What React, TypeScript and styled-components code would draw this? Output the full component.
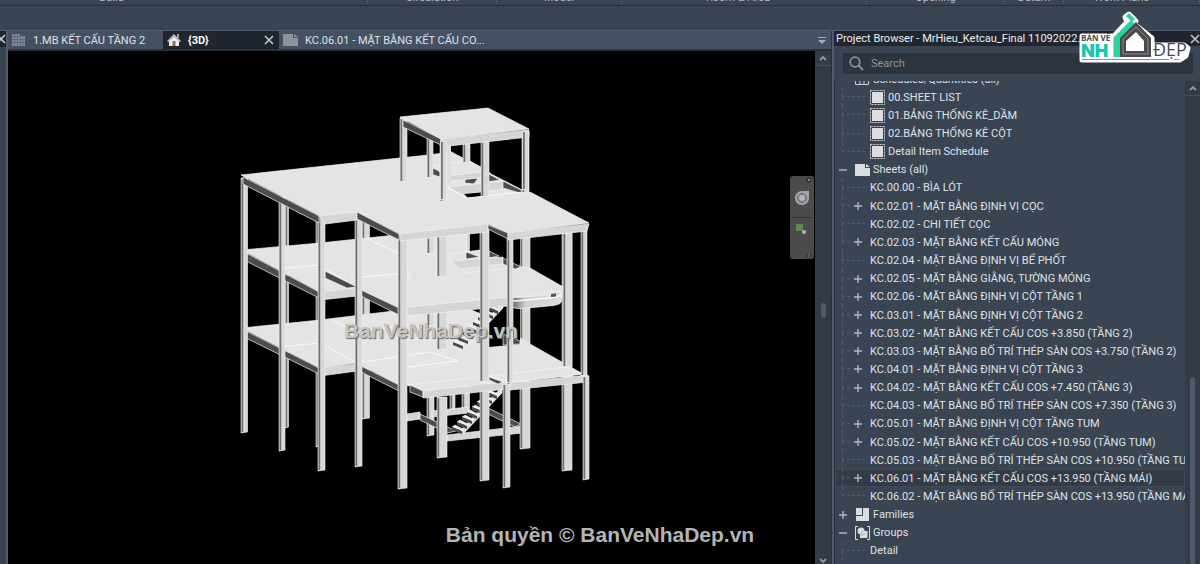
import React from "react";
import styled, { createGlobalStyle, css } from "styled-components";

const color = {
  frame: "#3b4452",
  frameDark: "#2a303b",
  edge: "#515b6b",
  tabs: "#465063",
  title: "#20262f",
  rail: "#343b47",
  thumb: "#4e596a",
  field: "#2d343f",
  selected: "#343b47",
  text: "#dfe2e6",
  muted: "#8d939d",
  guide: "#525b69",
};

const GlobalStyle = createGlobalStyle`
  * { box-sizing: border-box; }
  body {
    margin: 0;
    background: ${color.frame};
    color: ${color.text};
    font: 11px/18px Roboto, "Noto Sans", sans-serif;
  }
  button, input { font: inherit; color: inherit; border: 0; margin: 0; padding: 0; background: none; }
  ul { list-style: none; margin: 0; padding: 0; }
  svg { display: block; }
`;

const Shell = styled.div`
  position: relative;
  display: flex;
  flex-direction: column;
  height: 100vh;
  overflow: hidden;
`;

/* ---------- Ribbon ---------- */

const Ribbon = styled.header`
  display: grid;
  grid-template-columns: 368fr 129fr 125fr 245fr 138fr 59fr 136fr;
  grid-template-rows: 5px;
  align-items: end;
  height: 6px;
  overflow: hidden;
  border-bottom: 1px solid ${color.frameDark};
`;

const RibbonPanel = styled.div<{ $trail?: number }>`
  padding-right: ${(p) => p.$trail ?? 0}px;
  border-right: 1px solid #4a5362;
  text-align: center;
  line-height: 14px;
  color: #b9bec6;
  white-space: nowrap;
`;

const OptionsBar = styled.div`
  flex: none;
  height: 25px;
  border-bottom: 1px solid ${color.edge};
`;

const Workspace = styled.div`
  flex: 1;
  min-height: 0;
  display: flex;
`;

/* ---------- Left dock ---------- */

const Dock = styled.aside`
  width: 8px;
  flex: none;
  overflow: hidden;
  background: ${color.frame};
  border-right: 2px solid ${color.edge};
`;

const DockTitle = styled.div`
  display: flex;
  justify-content: flex-end;
  align-items: center;
  height: 16px;
  background: ${color.title};
`;

/* ---------- Documents ---------- */

const Documents = styled.main`
  flex: 1;
  min-width: 0;
  display: flex;
  flex-direction: column;
  border-right: 1px solid ${color.frameDark};
`;

const TabBar = styled.div`
  display: flex;
  align-items: stretch;
  height: 20px;
  background: ${color.tabs};
  border-bottom: 2px solid ${color.frameDark};
`;

const Tab = styled.div<{ $active?: boolean; $wide?: boolean }>`
  display: flex;
  align-items: center;
  width: ${(p) => (p.$wide ? 216 : p.$active ? 116 : 155)}px;
  padding: 0 5px 0 4px;
  background: ${(p) => (p.$active ? color.title : "transparent")};
  font-weight: ${(p) => (p.$active ? 700 : 400)};
  color: ${(p) => (p.$active ? "#fff" : color.text)};
`;

const TabButton = styled.button`
  flex: 1;
  display: flex;
  align-items: center;
  gap: 7px;
  line-height: 18px;
  white-space: nowrap;
  text-align: left;
  span { padding-top: 1px; }
`;

const IconButton = styled.button`
  display: grid;
  place-items: center;
  flex: none;
  width: 10px;
  height: 16px;
`;

const TabMenu = styled(IconButton)`
  margin: 1px 4px 0 auto;
`;

const ViewRow = styled.div`
  flex: 1;
  min-height: 0;
  display: flex;
`;

const Viewport = styled.section`
  position: relative;
  flex: 1;
  min-width: 0;
  background: #000;
`;

const Model = styled.svg`
  width: 100%;
  height: 100%;
`;

const NavigationBar = styled.div`
  position: absolute;
  top: 125px;
  right: 1px;
  width: 24px;
  height: 83px;
  border-radius: 3px;
  background: #4b4b4b;
`;

const Rail = styled.div<{ $width: number }>`
  display: flex;
  flex-direction: column;
  align-items: center;
  flex: none;
  width: ${(p) => p.$width}px;
  background: ${color.rail};
`;

const RailButton = styled.button`
  display: grid;
  place-items: center;
  width: 100%;
  height: 15px;
  border-bottom: 1px solid #454f5e;
`;

const RailSpace = styled.div<{ $grow: number }>`
  flex: ${(p) => p.$grow} 1 0;
`;

const Thumb = styled.div<{ $grow?: number }>`
  width: 5px;
  border-radius: 3px;
  background: ${color.thumb};
  ${(p) => (p.$grow ? css`flex: ${p.$grow} 1 0;` : css`height: 15px;`)}
`;

/* ---------- Project browser ---------- */

const Browser = styled.aside`
  display: flex;
  flex-direction: column;
  flex: none;
  width: 368px;
  border-left: 2px solid ${color.edge};
`;

const BrowserTitle = styled.div`
  display: flex;
  align-items: center;
  justify-content: space-between;
  flex: none;
  height: 15px;
  padding: 0 0 0 2px;
  background: ${color.title};
  color: #eceef0;
  line-height: 15px;
  white-space: nowrap;
`;

const SearchField = styled.label`
  display: flex;
  align-items: center;
  gap: 7px;
  flex: none;
  height: 21px;
  margin: 7px 7px 7px 9px;
  padding: 0 6px;
  background: ${color.field};
  input {
    flex: 1;
    min-width: 0;
    outline: none;
  }
  input::placeholder { color: ${color.muted}; opacity: 1; }
`;

const BrowserBody = styled.div`
  flex: 1;
  min-height: 0;
  display: flex;
`;

const TreeClip = styled.div`
  flex: 1;
  min-width: 0;
  display: flex;
  overflow: hidden;
  border-left: 1px solid ${color.frameDark};
`;

const Tree = styled.ul`
  flex: 1;
  min-width: 0;
  display: grid;
  grid-auto-rows: minmax(18px, 1fr);
  margin-top: -11px;
  padding-bottom: 4px;
`;

const TreeRow = styled.li<{ $selected?: boolean }>`
  display: flex;
  align-items: center;
  overflow: hidden;
  white-space: nowrap;
  background: ${(p) => (p.$selected ? color.selected : "transparent")};
  outline: ${(p) => (p.$selected ? "1px solid #414a59" : "none")};
  outline-offset: -1px;
`;

const Branch = styled.span<{ $last?: boolean; $short?: boolean }>`
  align-self: stretch;
  display: grid;
  grid-template-rows: 1fr 1fr;
  flex: none;
  width: ${(p) => (p.$short ? 8 : 23)}px;
  margin-left: 7px;
  &::before {
    content: "";
    border-left: 1px dashed ${color.guide};
    border-bottom: 1px dashed ${color.guide};
  }
  &::after {
    content: "";
    border-left: ${(p) => (p.$last ? "0" : `1px dashed ${color.guide}`)};
  }
`;

const Toggle = styled.button`
  display: grid;
  place-items: center;
  flex: none;
  width: 9px;
  height: 9px;
  margin-left: 3px;
  margin-right: 8px;
`;

const RowIcon = styled.span`
  flex: none;
  width: 15px;
  margin-right: 3px;
`;

const RowGap = styled.span`
  flex: none;
  width: 5px;
`;

const RowLabel = styled.span`
  padding-top: 1px;
`;

/* ---------- Overlays ---------- */

const Brand = styled.svg`
  position: absolute;
  top: 8px;
  right: 6px;
  width: 118px;
  height: 58px;
`;

const Copyright = styled.p`
  position: absolute;
  left: 0;
  right: 0;
  bottom: 17px;
  margin: 0;
  text-align: center;
  font: 700 21px/24px "Liberation Sans", Arial, sans-serif;
  color: #b4b4b4;
  pointer-events: none;
`;

/* ---------- Icons ---------- */

const Cross = ({ tone = "#c3c7cd" }: { tone?: string }) => (
  <svg width="10" height="10" viewBox="0 0 10 10" stroke={tone} strokeWidth="1.6">
    <path d="M1 1l8 8M9 1l-8 8" />
  </svg>
);

const ChevronUp = ({ down }: { down?: boolean }) => (
  <svg width="8" height="6" viewBox="0 0 8 6" fill="none" stroke="#8f98a5" strokeWidth="1.8">
    <path d={down ? "M1 1l3 3 3-3" : "M1 5l3-3 3 3"} />
  </svg>
);

const PlusMinus = ({ open }: { open?: boolean }) => (
  <svg width="8" height="8" viewBox="0 0 8 8" stroke="#b3b8c0" strokeWidth="1.4">
    <path d={open ? "M0 4h8" : "M0 4h8M4 0v8"} />
  </svg>
);

const PlanIcon = () => (
  <svg width="14" height="14" viewBox="0 0 14 14">
    <path d="M0 1h8v2h5v10H0z" fill="#858c98" />
    <path d="M0 3.500h8M0 6.500h13M0 9.500h13M2.500 1v12M5.500 1v12M8.500 3v10M11 3v10" stroke="#5c6575" strokeWidth="0.8" />
  </svg>
);

const HomeIcon = () => (
  <svg width="14" height="14" viewBox="0 0 14 14">
    <path d="M10 1h2v4h-2z" fill="#9aa0a8" />
    <path d="M2 7l5-5 5 5v6H2z" fill="#f0ede3" />
    <path d="M0 8l7-7 7 7-1.500 1L7 4 1.500 9z" fill="#b5b9bf" />
    <path d="M5.500 8h3v5h-3z" fill="#8d7440" />
  </svg>
);

const SheetIcon = ({ tone }: { tone: string }) => (
  <svg width="15" height="12" viewBox="0 0 15 12">
    <path d="M0 0h10v4h5v8H0z" fill={tone} />
    <path d="M11 0l4 3h-4z" fill={tone} />
  </svg>
);

const ScheduleIcon = () => (
  <svg width="15" height="15" viewBox="0 0 15 15">
    <rect x="0.500" y="0.500" width="14" height="14" fill="none" stroke="#c9ccd0" strokeDasharray="2 1" />
    <rect x="2" y="2" width="11" height="11" fill="#dedede" />
  </svg>
);

const TableIcon = () => (
  <svg width="14" height="12" viewBox="0 0 14 12" fill="none" stroke="#c9ccd0">
    <path d="M.5.5h13v11H.5zM.5 4.500h13M5 4.500v7M9 4.500v7" />
  </svg>
);

const FamilyIcon = () => (
  <svg width="14" height="14" viewBox="0 0 14 14" fill="#dcdddf">
    <path d="M1 0h6v7H1zM8 0h6v13H1V8h7z" />
  </svg>
);

const GroupIcon = () => (
  <svg width="15" height="14" viewBox="0 0 15 14">
    <path d="M3 .5H.5v13H3M12 .5h2.500v13H12" fill="none" stroke="#dcdddf" />
    <circle cx="6" cy="5" r="3.500" fill="#dcdddf" />
    <path d="M7 5h5.500v7H5V9z" fill="#dcdddf" />
    <path d="M9 4.500L5.500 8 8 9.500l1.500-2" fill="none" stroke="#aeb3ba" />
  </svg>
);

const SearchIcon = () => (
  <svg width="15" height="15" viewBox="0 0 15 15" fill="none" stroke="#8d939d" strokeWidth="1.800">
    <circle cx="6" cy="6" r="4.800" />
    <path d="M9.500 9.500l4.500 4.500" />
  </svg>
);

/* ---------- Structural model ---------- */

type Face = "top" | "front" | "side" | "hole" | "line";
const faceFill: Record<Face, string> = {
  top: "#e4e4e4",
  front: "#d5d5d5",
  side: "#4c4c4c",
  hole: "#000",
  line: "none",
};

const Faces = ({ items }: { items: [Face, string][] }) => (
  <>
    {items.map(([face, points], i) =>
      face === "line" ? (
        <polyline key={i} points={points} fill="none" stroke="#f8f8f8" strokeWidth="1" />
      ) : (
        <polygon
          key={i}
          points={points}
          fill={faceFill[face]}
          stroke={face === "hole" ? "none" : "#f4f4f4"}
          strokeWidth="0.700"
        />
      )
    )}
  </>
);

const Columns = ({ items }: { items: [number, number, number, number][] }) => (
  <>
    {items.map(([x, w, y1, y2], i) => (
      <g key={i}>
        <path d={`M${x} ${y1}h${w}V${y2 - 1}l${-w} 1z`} fill="#d8d8d8" stroke="#f2f2f2" strokeWidth="0.600" />
        <path d={`M${x + 0.5} ${y1 + 1}h1.700V${y2 - 1}h-1.700z`} fill="#6e6e6e" />
      </g>
    ))}
  </>
);

const Stair = ({ x, y, dy }: { x: number; y: number; dy: number }) => (
  <g>
    <path
      d={`M${x + 12} ${y + 6}L${x + 50} ${y + 6 - dy * 8}V${y - dy * 8}L${x + 8} ${y + 4}z`}
      fill="#dedede"
      stroke="#fff"
      strokeWidth="0.700"
    />
    {Array.from({ length: 8 }, (_, i) => (
      <g key={i}>
        <path d={`M${x + i * 5} ${y - i * dy}l11 4v-2l-8-4z`} fill="#eee" stroke="#fff" strokeWidth="0.500" />
        <path d={`M${x + i * 5} ${y - i * dy}l10 4v3l-10-4z`} fill="#4a4a4a" />
      </g>
    ))}
  </g>
);

const Building = () => (
  <Model viewBox="8 51 807 513" preserveAspectRatio="xMidYMin meet" role="img" aria-label="3D view">
    <defs>
      <linearGradient id="curve" x1="0" x2="1">
        <stop offset="0" stopColor="#555" />
        <stop offset="0.300" stopColor="#d0d0d0" />
        <stop offset="1" stopColor="#dedede" />
      </linearGradient>
    </defs>

    {/* foundation level */}
    <Columns
      items={[
        [285, 3.5, 200, 428],
        [316, 3, 220, 447],
        [362, 7.5, 215, 419],
        [427, 7, 230, 436],
        [462, 7.5, 230, 413],
        [450, 5, 380, 412],
      ]}
    />
    <Faces
      items={[
        ["front", "432,411 468,407 468,413 432,417"],
        ["front", "407,414 420,412 420,419 407,421"],
        ["side", "420,414 456,431 447,433 420,420"],
        ["side", "488,408 521,424 515,427 488,414"],
        ["front", "447,435 522,426 522,433 447,441"],
      ]}
    />
    <Columns items={[[520, 10, 232, 449]]} />
    <Stair x={452} y={427} dy={5} />
    <Columns items={[[562, 10, 230, 471]]} />

    {/* first floor */}
    <Faces
      items={[
        ["top", "242,328 320,320 402,310 468,305 530,344 583,374 508,383 408,385 399,385 357,363 320,368"],
        ["line", "280,347 320,343 357,363 430,352 458,361 407,367"],
        ["line", "332,320 357,332 410,324"],
        ["side", "242,329 319,368 319,374 242,336"],
        ["front", "320,368 357,364 357,371 320,376"],
        ["side", "357,364 399,385 399,391 357,370"],
        ["top", "407,385 490,376 503,382 423,391"],
        ["side", "410,385 423,391 423,397 410,392"],
        ["front", "423,391 507,382 507,389 423,398"],
        ["top", "490,376 566,367 583,374 512,382"],
        ["side", "489,377 503,382 498,384 489,380"],
        ["front", "510,383 588,375 588,382 510,390"],
        ["hole", "470,309 482,314 482,340 496,338 496,305 470,305"],
        ["hole", "489,308 520,305 520,344 489,347"],
        ["side", "503,334 520,341 520,344 503,345"],
      ]}
    />
    <Columns items={[[437, 10, 300, 350], [427, 7, 300, 326], [437, 10, 397, 458]]} />
    <Stair x={453} y={342} dy={5} />

    {/* second floor */}
    <Faces
      items={[
        ["top", "242,250 320,243 405,234 466,230 467,258 530,268 565,288 565,292 512,298 407,307 399,309 357,288 320,292"],
        ["line", "279,269 318,265 357,287"],
        ["line", "350,278 407,273"],
        ["line", "366,238 402,255 410,280"],
        ["side", "325,271 357,287 347,288 325,278"],
        ["side", "242,251 319,292 319,298 242,259"],
        ["front", "320,292 357,288 357,296 320,300"],
        ["side", "357,288 399,308 399,315 357,294"],
        ["front", "407,307 508,297 508,306 407,316"],
        ["hole", "470,237 482,241 482,250 470,245"],
        ["hole", "489,238 520,236 520,264 489,250"],
        ["top", "450,254 480,250 518,267 467,273 450,262"],
        ["side", "466,252 480,257 466,259"],
        ["side", "489,251 499,256 489,258"],
        ["front", "451,261 503,257 503,264 460,269"],
        ["side", "503,258 521,267 515,269 503,264"],
        ["front", "508,298 565,291 565,297 508,304"],
      ]}
    />
    <path
      d="M510 298L552 294.500V291.500H558Q562 292 561.500 296V301Q561 304.500 553 305.500L522 308.500Q512 309 510 305z"
      fill="url(#curve)"
      stroke="#f4f4f4"
      strokeWidth="0.800"
    />
    <path d="M510 300q4 1.500 12 .5l31-3q7-1 8-4" fill="none" stroke="#fafafa" strokeWidth="1.500" />
    <path d="M551 294l5-.5v3l-5 .5z" fill="#555" />

    {/* front columns */}
    <Columns
      items={[
        [437, 10, 232, 277],
        [427, 7, 232, 254],
        [241, 6.5, 178, 433],
        [279, 6, 197, 451],
        [318, 7, 216, 471],
        [355, 7, 212, 467],
        [398, 9, 234, 489],
        [480, 9, 228, 382],
        [480, 9, 391, 481],
        [507, 6, 234, 383],
        [503, 7, 384, 488],
        [563, 9, 230, 367],
        [581, 6, 226, 376],
        [583, 6, 376, 480],
      ]}
    />

    {/* main roof */}
    <Faces
      items={[
        ["top", "241,175 428,155 452,152 470,161 490,172 523,190 530,192 589,223 508,233 488,224 400,234 357,212 320,216"],
        ["hole", "452,152 466,159 482,159 482,169 523,190 530,192 530,187 490,160"],
        ["side", "428,166 440,171 440,177 428,173"],
        ["top", "431,166 465,161 490,173 448,177"],
        ["side", "465,179 478,178 474,184 465,183"],
        ["side", "487,173 500,180 487,182"],
        ["front", "448,176 486,171 486,177 450,181"],
        ["front", "448,187 503,181 503,189 462,195"],
        ["side", "503,181 523,191 520,193 503,188"],
        ["hole", "464,194 486,192 486,196 468,198"],
        ["line", "448,188 467,198 523,192"],
        ["side", "243,177 319,216 319,223 243,184"],
        ["front", "320,216 357,212 357,220 325,224"],
        ["side", "357,212 399,234 399,240 357,219"],
        ["front", "400,234 488,224 488,232 400,241"],
        ["side", "488,225 508,233 508,239 488,229"],
        ["front", "508,233 589,224 587,231 508,240"],
      ]}
    />

    {/* stair tower */}
    <Columns
      items={[
        [427, 6, 136, 178],
        [463, 7, 140, 163],
        [481, 8, 140, 197],
        [400, 7, 118, 182],
        [522, 7, 132, 193],
        [440, 6.5, 139, 202],
      ]}
    />
    <path d="M447 144h4v39h-4z" fill="#dedede" />
    <Faces
      items={[
        ["side", "403,120 441,139 441,145 403,127"],
        ["front", "441,139 529,130 529,137 449,146 441,146"],
        ["top", "400,117 488,108 529,129 441,139"],
      ]}
    />
    <Columns items={[[440.5, 6, 141, 200], [522.5, 6, 131, 190]]} />

    <g fontFamily="Liberation Sans, Arial, sans-serif" fontSize="21" fontWeight="700">
      <text x="344" y="338" fill="#c4c4c4" style={{ textShadow: "1px 1px 1px #666" }}>
        BanVeNhaDep.vn
      </text>
    </g>
  </Model>
);

const Logo = () => (
  <Brand viewBox="1076 8 118 58" role="img" aria-label="Bản vẽ nhà đẹp">
    <g fill="#fff" stroke="#fff" strokeWidth="5" strokeLinejoin="round">
      <path d="M1082 36h30v24h-30zM1113 58V37l14-15-2-5 4-3 7 7-3 2 19 15v20zM1154 45h30l4 3-2 8-6 4h-98v-3h72z" />
    </g>
    <text x="1081" y="41" fontFamily="Open Sans, sans-serif" fontSize="8" fontWeight="700" fill="#4a4a4e">
      BẢN VẼ
    </text>
    <text x="1081" y="57" fontFamily="Inter, sans-serif" fontSize="18" fontWeight="900" fill="#19c7ae">
      NH
    </text>
    <text x="1153" y="56" fontFamily="Open Sans, sans-serif" fontSize="18" fill="#4a4a4e">
      ĐẸP
    </text>
    <path d="M1113.500 57V37.500L1131 20l4 4-15 16v17z" fill="#28d59b" />
    <path d="M1126 16l3-3 6 6-3 3z" fill="#28d59b" />
    <path d="M1120 57V38l16-16 15 16v19z" fill="#4c484d" />
    <path d="M1123 54V39l13-12 12 12v15z" fill="none" stroke="#a19ea2" strokeWidth="0.800" />
    <path d="M1126 51V41l10-9 8 9v10z" fill="#fff" />
    <path d="M1082 59.500h87M1174 59.500h5" stroke="#19c7ae" />
  </Brand>
);

/* ---------- Data ---------- */

const ribbonPanels: { name: string; trail?: number }[] = [
  { name: "Build", trail: 144 },
  { name: "Circulation" },
  { name: "Model" },
  { name: "Room & Area", trail: 12 },
  { name: "Opening" },
  { name: "Datum" },
  { name: "Work Plane", trail: 20 },
];

type Node = {
  label: string;
  level: 0 | 1;
  state?: "open" | "closed";
  icon?: React.ReactNode;
  selected?: boolean;
  last?: boolean;
};

const schedule = (label: string, last?: boolean): Node => ({ label, level: 1, icon: <ScheduleIcon />, last });
const sheet = (label: string, closed?: boolean, extra?: Partial<Node>): Node => ({
  label,
  level: 1,
  state: closed ? "closed" : undefined,
  ...extra,
});

const nodes: Node[] = [
  { label: "Schedules/Quantities (all)", level: 0, icon: <TableIcon />, state: "open" },
  schedule("00.SHEET LIST"),
  schedule("01.BẢNG THỐNG KÊ_DẦM"),
  schedule("02.BẢNG THỐNG KÊ CỘT"),
  schedule("Detail Item Schedule", true),
  { label: "Sheets (all)", level: 0, icon: <SheetIcon tone="#dcdddf" />, state: "open" },
  sheet("KC.00.00 - BÌA LÓT"),
  sheet("KC.02.01 - MẶT BẰNG ĐỊNH VỊ CỌC", true),
  sheet("KC.02.02 - CHI TIẾT CỌC"),
  sheet("KC.02.03 - MẶT BẰNG KẾT CẤU MÓNG", true),
  sheet("KC.02.04 - MẶT BẰNG ĐỊNH VỊ BỂ PHỐT"),
  sheet("KC.02.05 - MẶT BẰNG GIẰNG, TƯỜNG MÓNG", true),
  sheet("KC.02.06 - MẶT BẰNG ĐỊNH VỊ CỘT TẦNG 1", true),
  sheet("KC.03.01 - MẶT BẰNG ĐỊNH VỊ CỘT TẦNG 2", true),
  sheet("KC.03.02 - MẶT BẰNG KẾT CẤU COS +3.850 (TẦNG 2)", true),
  sheet("KC.03.03 - MẶT BẰNG BỐ TRÍ THÉP SÀN COS +3.750 (TẦNG 2)", true),
  sheet("KC.04.01 - MẶT BẰNG ĐỊNH VỊ CỘT TẦNG 3", true),
  sheet("KC.04.02 - MẶT BẰNG KẾT CẤU COS +7.450 (TẦNG 3)", true),
  sheet("KC.04.03 - MẶT BẰNG BỐ TRÍ THÉP SÀN COS +7.350 (TẦNG 3)"),
  sheet("KC.05.01 - MẶT BẰNG ĐỊNH VỊ CỘT TẦNG TUM", true),
  sheet("KC.05.02 - MẶT BẰNG KẾT CẤU COS +10.950 (TẦNG TUM)", true),
  sheet("KC.05.03 - MẶT BẰNG BỐ TRÍ THÉP SÀN COS +10.950 (TẦNG TUM)"),
  sheet("KC.06.01 - MẶT BẰNG KẾT CẤU COS +13.950 (TẦNG MÁI)", true, { selected: true }),
  sheet("KC.06.02 - MẶT BẰNG BỐ TRÍ THÉP SÀN COS +13.950 (TẦNG MÁI)", false, { last: true }),
  { label: "Families", level: 0, icon: <FamilyIcon />, state: "closed" },
  { label: "Groups", level: 0, icon: <GroupIcon />, state: "open" },
  { label: "Detail", level: 1 },
];

const TreeItem = ({ node }: { node: Node }) => {
  const nested = node.level === 1;
  return (
    <TreeRow role="treeitem" aria-level={node.level + 1} aria-selected={!!node.selected} $selected={node.selected}>
      {nested && <Branch $last={node.last} $short={!!node.state} />}
      {node.state ? (
        <Toggle aria-label={node.state === "open" ? "Collapse" : "Expand"}>
          <PlusMinus open={node.state === "open"} />
        </Toggle>
      ) : (
        <RowGap />
      )}
      {node.icon && <RowIcon>{node.icon}</RowIcon>}
      <RowLabel>{node.label}</RowLabel>
    </TreeRow>
  );
};

export default function App() {
  return (
    <Shell>
      <GlobalStyle />
      <Ribbon>
        {ribbonPanels.map((p) => (
          <RibbonPanel key={p.name} $trail={p.trail}>
            {p.name}
          </RibbonPanel>
        ))}
      </Ribbon>
      <OptionsBar />
      <Workspace>
        <Dock>
          <DockTitle>
            <IconButton aria-label="Close properties">
              <Cross />
            </IconButton>
          </DockTitle>
        </Dock>

        <Documents>
          <TabBar>
            <Tab>
              <TabButton>
                <PlanIcon />
                <span>1.MB KẾT CẤU TẦNG 2</span>
              </TabButton>
            </Tab>
            <Tab $active>
              <TabButton>
                <HomeIcon />
                <span>{"{3D}"}</span>
              </TabButton>
              <IconButton aria-label="Close view">
                <Cross />
              </IconButton>
            </Tab>
            <Tab $wide>
              <TabButton>
                <SheetIcon tone="#8e949e" />
                <span>KC.06.01 - MẶT BẰNG KẾT CẤU CO...</span>
              </TabButton>
            </Tab>
            <TabMenu aria-label="All views">
              <svg width="8" height="7" viewBox="0 0 8 7" fill="#a4abb6">
                <path d="M0 0h8v1H0zM0 3h8L4 7z" />
              </svg>
            </TabMenu>
          </TabBar>
          <ViewRow>
            <Viewport>
              <Building />
              <NavigationBar>
                <svg width="24" height="83" viewBox="0 0 24 83">
                  <circle cx="19" cy="4" r="2.500" fill="#2f2f2f" />
                  <path d="M18 3l2 2M20 3l-2 2" stroke="#aaa" strokeWidth="0.700" />
                  <path d="M12 15h7v7a7 7 0 1 1-7-7z" fill="#a3a6ac" />
                  <circle cx="12" cy="22" r="4.500" fill="#8a8d94" stroke="#63666c" />
                  <rect x="9.500" y="19.500" width="5" height="5" rx="1" fill="#b7b9bf" />
                  <path d="M11 36h2l-1 1zM11 66h2l-1 1z" fill="#2a2a2a" />
                  <path d="M2 41.500h20" stroke="#343434" />
                  <path d="M6 48h7v7H6z" fill="#5f8a4b" />
                  <circle cx="14" cy="56" r="2" fill="#b5b5b5" />
                  <circle cx="19" cy="79" r="2.500" fill="#2f2f2f" />
                  <path d="M17.500 78h3M18 80h2" stroke="#aaa" strokeWidth="0.700" />
                </svg>
              </NavigationBar>
            </Viewport>
            <Rail $width={16}>
              <RailButton aria-label="Scroll up">
                <ChevronUp />
              </RailButton>
              <RailSpace $grow={239} />
              <Thumb />
              <RailSpace $grow={242} />
              <ChevronUp down />
            </Rail>
          </ViewRow>
        </Documents>

        <Browser>
          <BrowserTitle>
            Project Browser - MrHieu_Ketcau_Final 11092022.0
            <IconButton aria-label="Close project browser">
              <Cross />
            </IconButton>
          </BrowserTitle>
          <SearchField>
            <SearchIcon />
            <input type="text" placeholder="Search" aria-label="Search" />
          </SearchField>
          <BrowserBody>
            <TreeClip>
              <Tree role="tree">
                {nodes.map((n) => (
                  <TreeItem key={n.label} node={n} />
                ))}
              </Tree>
            </TreeClip>
            <Rail $width={15}>
              <RailButton aria-label="Scroll up">
                <ChevronUp />
              </RailButton>
              <RailSpace $grow={281} />
              <Thumb $grow={187} />
            </Rail>
          </BrowserBody>
        </Browser>
      </Workspace>
      <Copyright>Bản quyền © BanVeNhaDep.vn</Copyright>
      <Logo />
    </Shell>
  );
}
